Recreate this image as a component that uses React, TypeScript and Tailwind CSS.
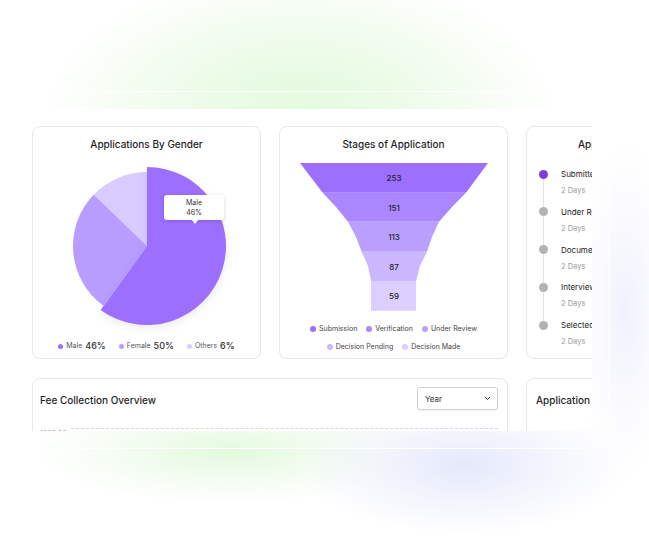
import React from 'react';

const pt = (cx: number, cy: number, r: number, a: number) => {
  const rad = (a * Math.PI) / 180;
  return [cx + r * Math.sin(rad), cy - r * Math.cos(rad)];
};

const slice = (cx: number, cy: number, r: number, a0: number, a1: number) => {
  const [x0, y0] = pt(cx, cy, r, a0);
  const [x1, y1] = pt(cx, cy, r, a1);
  const large = a1 - a0 > 180 ? 1 : 0;
  return `M${cx} ${cy} L${x0} ${y0} A${r} ${r} 0 ${large} 1 ${x1} ${y1} Z`;
};

const funnel = [
  { v: 253, c: '#9d6fff', pts: '20,36 208,36 186,65.7 42.7,65.7' },
  { v: 151, c: '#ab87ff', pts: '42.7,65.7 186,65.7 172,80 159,94.7 68,94.7 56,80' },
  { v: 113, c: '#bb9fff', pts: '68,94.7 159,94.7 152,110 147,124.7 81.7,124.7 76,110' },
  { v: 87, c: '#cbb7fd', pts: '81.7,124.7 147,124.7 140,139 136,154 91,154 88,139' },
  { v: 59, c: '#dccefe', pts: '91,154 136,154 136,183.7 91,183.7' },
];

const stages = ['Submitted', 'Under Review', 'Document Verification', 'Interview', 'Selected'];

function GenderCard() {
  return (
    <div className="relative w-[229px] h-[233px] shrink-0 rounded-[8px] border border-[#e6e6ea] bg-white">
      <div className="pt-[10px] h-[24px] text-center text-[10px] leading-[14px] font-medium text-[#1f1f1f]">
        Applications By Gender
      </div>
      <svg width="228" height="189" viewBox="0 24 228 189" className="block">
        <path d={slice(114, 119, 74, 314, 360)} fill="#d9cbff" />
        <path d={slice(114, 119, 74, 216, 314)} fill="#b89dff" />
        <path d={slice(114, 119, 79, 0, 216)} fill="#9d6fff" style={{ filter: 'drop-shadow(0 3px 4px rgba(0,0,0,0.08))' }} />
      </svg>
      {/* tooltip */}
      <div className="absolute left-[131px] top-[68px] w-[60px] h-[25px] rounded-[3px] bg-white shadow-[0_1px_4px_rgba(0,0,0,0.15)] flex flex-col items-center justify-center text-[7px] leading-[10px] text-[#333]">
        <span>Male</span>
        <span>46%</span>
        <div className="absolute -bottom-[4px] left-[28px] w-0 h-0 border-l-[3px] border-r-[3px] border-t-[4px] border-l-transparent border-r-transparent border-t-white" />
      </div>
      <div className="flex justify-center items-center gap-[13px] h-[12px] leading-[12px]">
        {[
          ['Male', '46%', '#9d6fff'],
          ['Female', '50%', '#b89dff'],
          ['Others', '6%', '#d9cbff'],
        ].map(([l, v, c]) => (
          <div key={l} className="flex items-center gap-[3px]">
            <span className="w-[5px] h-[5px] rounded-full" style={{ background: c }} />
            <span className="text-[7px] text-[#555]">{l}</span>
            <span className="text-[9px] font-medium text-[#333]">{v}</span>
          </div>
        ))}
      </div>
    </div>
  );
}

function StagesCard() {
  const legend = [
    ['Submission', '#9d6fff'],
    ['Verification', '#ab87ff'],
    ['Under Review', '#bb9fff'],
    ['Decision Pending', '#cbb7fd'],
    ['Decision Made', '#dccefe'],
  ];
  const Item = ({ l, c }: { l: string; c: string }) => (
    <div className="flex items-center gap-[3px]">
      <span className="w-[6px] h-[6px] rounded-full" style={{ background: c }} />
      <span className="text-[7px] text-[#444]">{l}</span>
    </div>
  );
  return (
    <div className="w-[229px] h-[233px] shrink-0 rounded-[8px] border border-[#e6e6ea] bg-white">
      <div className="pt-[10px] h-[24px] text-center text-[10px] leading-[14px] font-medium text-[#1f1f1f]">
        Stages of Application
      </div>
      <svg width="228" height="164" viewBox="0 24 228 164" className="block">
        {funnel.map((s, i) => {
          const ys = [51, 80.5, 110, 139.5, 169];
          return (
            <g key={s.v}>
              <polygon points={s.pts} fill={s.c} />
              <text x="114" y={ys[i] + 3} textAnchor="middle" fontSize="8" fontWeight="500" fill="#222" fontFamily="Inter, sans-serif">
                {s.v}
              </text>
            </g>
          );
        })}
      </svg>
      <div className="mt-[8px] flex flex-col gap-[6px]">
        <div className="flex justify-center gap-[9px] h-[12px] items-center">
          {legend.slice(0, 3).map(([l, c]) => (
            <Item key={l} l={l} c={c} />
          ))}
        </div>
        <div className="flex justify-center gap-[9px] h-[12px] items-center">
          {legend.slice(3).map(([l, c]) => (
            <Item key={l} l={l} c={c} />
          ))}
        </div>
      </div>
    </div>
  );
}

function TimelineCard() {
  return (
    <div className="relative w-[229px] h-[233px] shrink-0 rounded-[8px] border border-[#e6e6ea] bg-white">
      <div className="pt-[10px] h-[24px] pl-[51px] text-[10px] leading-[14px] font-medium text-[#1f1f1f] whitespace-nowrap">
        Application Timeline
      </div>
      <div className="absolute left-[16px] top-[47px] w-[1px] h-[151px] bg-[#e3e3e3]" />
      <div className="pt-[15px] pl-[12px] flex flex-col">
        {stages.map((s, i) => (
          <div key={s} className="flex h-[37.8px]">
            <div className="w-[22px] h-[16px] flex items-center">
              <span className={`relative w-[9px] h-[9px] rounded-full ${i === 0 ? 'bg-[#7b3fd6]' : 'bg-[#b3b3b3]'}`} />
            </div>
            <div className="flex flex-col whitespace-nowrap">
              <span className="h-[16px] leading-[16px] text-[8px] text-[#222]">{s}</span>
              <span className="leading-[18px] text-[7.5px] text-[#9a9a9a]">2 Days</span>
            </div>
          </div>
        ))}
      </div>
    </div>
  );
}

function FeeCard() {
  return (
    <div className="w-[476px] h-[200px] shrink-0 rounded-[8px] border border-[#e6e6ea] bg-white">
      <div className="flex items-start justify-between pl-[7px] pr-[9px] pt-[8px]">
        <div className="pt-[6px] text-[10px] leading-[14px] font-medium text-[#1f1f1f]">Fee Collection Overview</div>
        <div className="w-[81px] h-[23px] rounded-[3px] border border-[#cfcfd4] shadow-[0_1px_2px_rgba(0,0,0,0.06)] flex items-center justify-between pl-[7px] pr-[6px]">
          <span className="text-[8px] text-[#333]">Year</span>
          <svg width="7" height="5" viewBox="0 0 7 5">
            <path d="M1 1l2.5 2.5L6 1" stroke="#444" strokeWidth="1" fill="none" />
          </svg>
        </div>
      </div>
      <div className="mt-[15px] flex items-start gap-[4px] pl-[7px] pr-[9px] h-[10px]">
        <span className="mt-[4px] text-[7px] text-[#a0a0a0] leading-[10px]">1000.00</span>
        <div className="mt-[3px] flex-1 border-t border-dashed border-[#d4d4dc]" />
      </div>
    </div>
  );
}

function AppCard() {
  return (
    <div className="w-[229px] h-[200px] shrink-0 rounded-[8px] border border-[#e6e6ea] bg-white">
      <div className="pt-[14px] pl-[9px] text-[10px] leading-[14px] font-medium text-[#1f1f1f] whitespace-nowrap">
        Application Summary
      </div>
    </div>
  );
}

export default function App() {
  return (
    <div className="relative w-[649px] h-[543px] overflow-hidden bg-white font-[Inter,sans-serif]">
      {/* background glows */}
      <div className="absolute left-[30px] top-[-40px] w-[540px] h-[320px] pointer-events-none bg-[radial-gradient(ellipse_at_center,#dff9d8_0%,rgba(232,250,227,0.7)_35%,rgba(255,255,255,0)_68%)]" />
      <div className="absolute left-[30px] top-[395px] w-[400px] h-[110px] pointer-events-none bg-[radial-gradient(ellipse_at_center,#e2f9dc_0%,rgba(234,250,230,0.5)_40%,rgba(255,255,255,0)_70%)]" />
      <div className="absolute left-[300px] top-[395px] w-[330px] h-[140px] pointer-events-none bg-[radial-gradient(ellipse_at_center,#e4e8fb_0%,rgba(234,237,252,0.5)_40%,rgba(255,255,255,0)_70%)]" />
      <div className="absolute left-[575px] top-[140px] w-[100px] h-[340px] pointer-events-none bg-[radial-gradient(ellipse_at_center,#eff1fd_0%,rgba(242,243,253,0.4)_40%,rgba(255,255,255,0)_70%)]" />

      {/* glass frame */}
      <div className="relative mt-[91px] -ml-[30px] w-[640px] h-[358px] rounded-[30px] border border-white bg-white/10 p-[17px]">
        <div className="h-full w-full rounded-[20px] bg-white overflow-hidden pt-[17px] pl-[44px] flex flex-col gap-[19px]">
          <div className="flex gap-[18px]">
            <GenderCard />
            <StagesCard />
            <TimelineCard />
          </div>
          <div className="flex gap-[18px]">
            <FeeCard />
            <AppCard />
          </div>
        </div>
      </div>
    </div>
  );
}
